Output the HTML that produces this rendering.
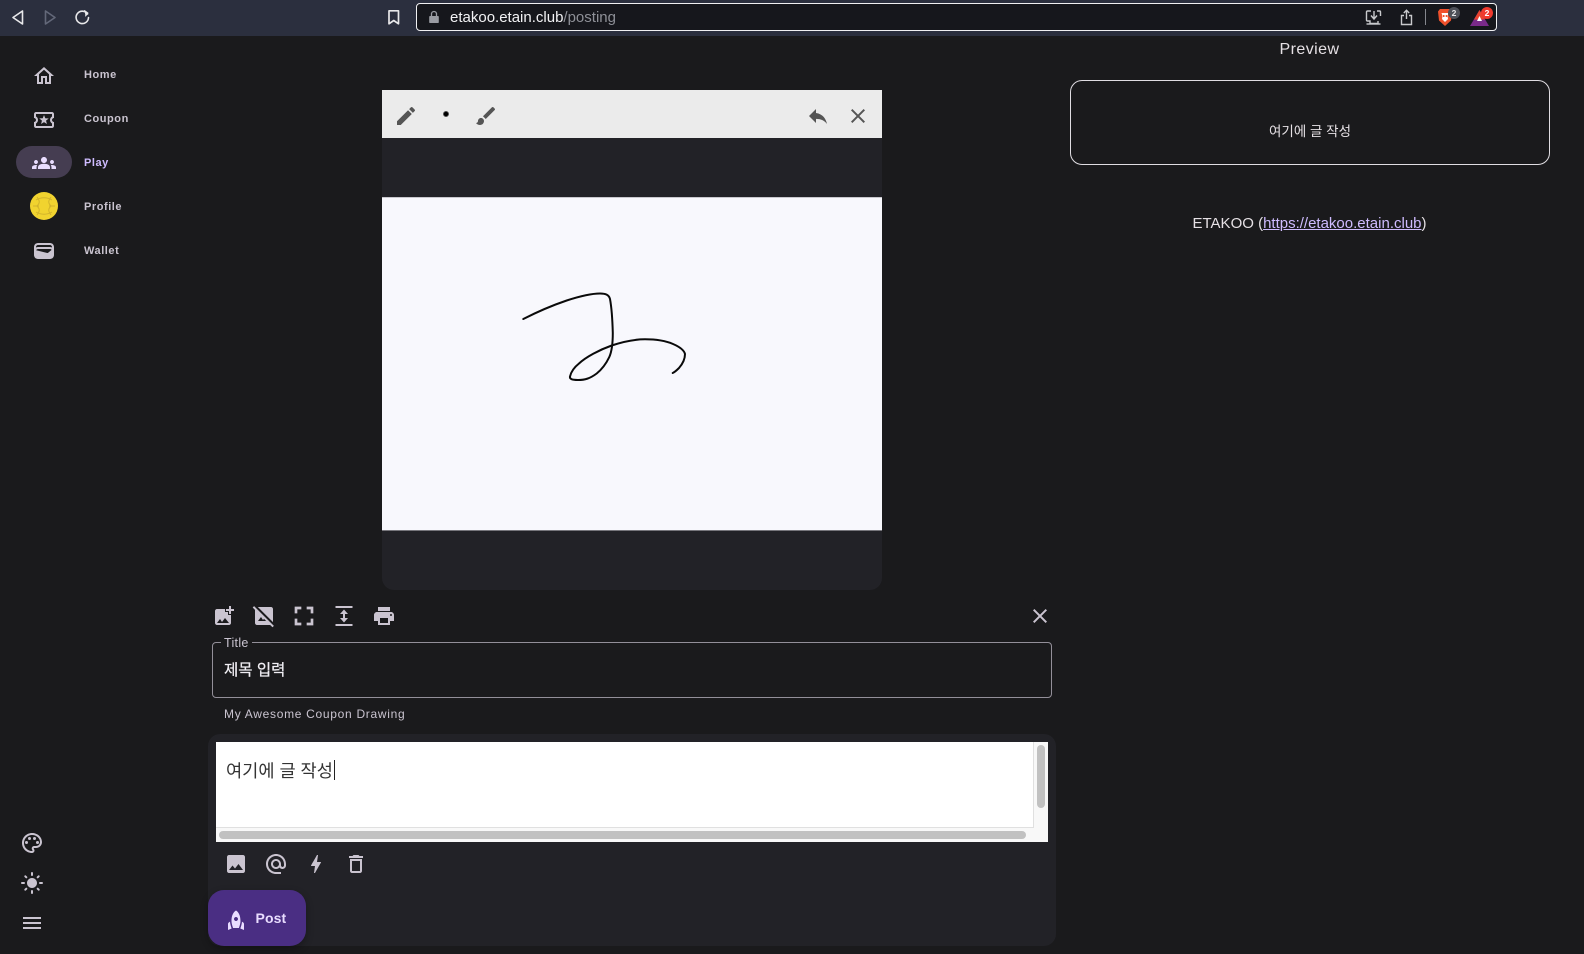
<!DOCTYPE html>
<html lang="ko"><head><meta charset="utf-8"><title>ETAKOO</title>
<style>
html,body{margin:0;padding:0;width:1584px;height:954px;overflow:hidden;background:#1a1a1c}
body{position:relative;font-family:"Liberation Sans","Noto Sans CJK KR",sans-serif}
.a,svg.i,svg.t{position:absolute}
svg.i{width:24px;height:24px;fill:#cac4d0}
svg.t{width:24px;height:24px;fill:#555}
.n{position:absolute;left:84px;font-size:11px;line-height:14px;font-weight:700;letter-spacing:.55px;color:#cac4d0}
</style></head><body>

<!-- browser bar -->
<div class="a" style="left:0;top:0;width:1584px;height:36px;background:#2b2f3e"></div>
<svg class="a" style="left:0;top:0" width="110" height="36" fill="none" stroke-linejoin="round" stroke-linecap="round">
<path d="M22.5 11v13L13 17.5z" stroke="#e8e8ea" stroke-width="1.6"/>
<path d="M45.5 11v13L55 17.5z" stroke="#636879" stroke-width="1.6"/>
<path d="M87.5 14a6.2 6.2 0 1 0 1 3.5" stroke="#e8e8ea" stroke-width="1.6"/>
<path d="M84.500 10.500l3.500 2.500-2.500 3" fill="#e8e8ea" stroke="#e8e8ea" stroke-width="1"/>
</svg>
<svg class="a" style="left:387px;top:9px" width="14" height="17" fill="none"><path d="M2 1.800h9.500v13l-4.750-3.300L2 14.800z" stroke="#e8e8ea" stroke-width="1.700" stroke-linejoin="round"/></svg>
<div class="a" style="left:416px;top:3px;width:1079px;height:26px;border:1px solid #f0f0f2;border-radius:4px;background:#16171c"></div>
<svg class="a" style="left:429px;top:10px" width="10" height="14"><path d="M1 6h8a.8.8 0 0 1 .8.800v5.400a.8.8 0 0 1-.8.800H1a.8.8 0 0 1-.8-.8V6.800A.8.8 0 0 1 1 6z" fill="#9a9ca3"/><path d="M2.500 6V4a2.500 2.500 0 0 1 5 0v2" fill="none" stroke="#9a9ca3" stroke-width="1.300"/></svg>
<div class="a" style="left:450px;top:9px;font-size:15px;line-height:18px;color:#f2f2f4;white-space:nowrap">etakoo.etain.club<span style="color:#8e9097">/posting</span></div>
<svg class="a" style="left:1365px;top:9px" width="18" height="18" fill="none" stroke="#c9cacd" stroke-width="1.400"><path d="M6 2H2.500a1 1 0 0 0-1 1v8a1 1 0 0 0 1 1h2.500v2.500h8V12M12 2h2.500a1 1 0 0 1 1 1v4"/><path d="M9 2v7M6 6.500L9 10l3-3.500"/><path d="M1.500 15h14"/></svg>
<svg class="a" style="left:1400px;top:9px" width="13" height="17" fill="none" stroke="#c9cacd" stroke-width="1.400"><path d="M4 6.500H1.500v9h10v-9H9M6.500 10V1.500M3.800 4L6.500 1.300 9.200 4"/></svg>
<div class="a" style="left:1425px;top:9px;width:1px;height:16px;background:#85878e"></div>
<svg class="a" style="left:1437px;top:8px" width="16" height="20"><path d="M3 1h10l2 2.500-1 9-6 5.500-6-5.500-1-9z" fill="#f0512c"/><path d="M4.500 5h7l-1 3 .5 3-3 3-3-3 .5-3z" fill="#fff"/><path d="M6 7h1.500v2H6zM8.700 7h1.500v2H8.700z" fill="#f0512c"/></svg>
<div class="a" style="left:1448px;top:7px;width:12px;height:12px;border-radius:6px;background:#4e5058;color:#e8e8ea;font-size:8.500px;font-weight:700;line-height:12px;text-align:center">2</div>
<svg class="a" style="left:1470px;top:9px" width="19" height="17"><path d="M9.500 1L19 17H0z" fill="#7a2a8a"/><path d="M9.500 1L15 10.500H4z" fill="#e8432e"/><path d="M9.500 7l2.500 5H7z" fill="#fff"/></svg>
<div class="a" style="left:1481px;top:7px;width:12px;height:12px;border-radius:6px;background:#f03a2e;color:#fff;font-size:8.500px;font-weight:700;line-height:12px;text-align:center">2</div>

<!-- sidebar -->
<svg class="i" style="left:32px;top:64px" viewBox="0 0 24 24"><path d="M12 5.690l5 4.500V18h-2v-6H9v6H7v-7.810l5-4.500M12 3L2 12h3v8h6v-6h2v6h6v-8h3L12 3z"/></svg>
<svg class="i" style="left:32px;top:107.500px" viewBox="0 0 24 24"><path d="M22 10V6c0-1.110-.9-2-2-2H4c-1.100 0-1.990.89-1.990 2v4c1.100 0 1.990.9 1.990 2s-.89 2-2 2v4c0 1.100.9 2 2 2h16c1.100 0 2-.9 2-2v-4c-1.100 0-2-.9-2-2s.9-2 2-2zm-2-1.460c-1.190.69-2 1.990-2 3.460s.81 2.770 2 3.460V18H4v-2.540c1.190-.69 2-1.990 2-3.460 0-1.480-.8-2.770-1.990-3.460L4 6h16v2.540zM9.070 16L12 14.120 14.930 16l-.89-3.360 2.690-2.200-3.470-.21L12 7l-1.270 3.220-3.470.21 2.690 2.200z"/></svg>
<div class="a" style="left:16px;top:146px;width:56px;height:32px;border-radius:16px;background:#453d51"></div>
<svg class="i" style="left:32px;top:151px;fill:#e9ddff" viewBox="0 0 24 24"><path d="M12 12.750c1.630 0 3.070.39 4.240.9 1.080.48 1.760 1.560 1.760 2.730V18H6v-1.610c0-1.180.68-2.260 1.760-2.730 1.170-.52 2.610-.91 4.240-.91zM4 13c1.100 0 2-.9 2-2s-.9-2-2-2-2 .9-2 2 .9 2 2 2zm1.130 1.100c-.37-.06-.74-.1-1.130-.1-.99 0-1.930.21-2.780.58C.48 14.900 0 15.620 0 16.430V18h4.500v-1.610c0-.83.23-1.610.63-2.290zM20 13c1.100 0 2-.9 2-2s-.9-2-2-2-2 .9-2 2 .9 2 2 2zm4 3.430c0-.81-.48-1.530-1.220-1.850-.85-.37-1.790-.58-2.780-.58-.39 0-.76.04-1.130.1.4.68.63 1.460.63 2.290V18H24v-1.570zM12 6c1.660 0 3 1.340 3 3s-1.340 3-3 3-3-1.340-3-3 1.340-3 3-3z"/></svg>
<svg class="a" style="left:30px;top:192px" width="28" height="28" viewBox="0 0 28 28"><circle cx="14" cy="14" r="14" fill="#f1d32f"/><g fill="none" stroke="#d2b32c" stroke-width="1"><path d="M7 5c3 4 3 6 0 9M21 5c-3 4-3 6 0 9M7 23c3-4 3-6 0-9M21 23c-3-4-3-6 0-9M6 8c5-3 11-3 16 0M6 20c5 3 11 3 16 0M3 14h6M19 14h6"/></g></svg>
<svg class="i" style="left:32px;top:239px" viewBox="0 0 24 24"><path d="M18 4H6C3.790 4 2 5.790 2 8v8c0 2.210 1.790 4 4 4h12c2.210 0 4-1.790 4-4V8c0-2.210-1.790-4-4-4zm-1.860 9.770c-.24.2-.57.28-.88.2L4.150 11.250C4.450 10.520 5.160 10 6 10h12c.67 0 1.260.34 1.630.84l-3.490 2.930zM6 6h12c1.100 0 2 .9 2 2v.55C19.410 8.210 18.730 8 18 8H6c-.73 0-1.410.21-2 .55V8c0-1.100.9-2 2-2z"/></svg>
<div class="n" style="top:68px">Home</div>
<div class="n" style="top:112px">Coupon</div>
<div class="n" style="top:156px;color:#cfbcff">Play</div>
<div class="n" style="top:200px">Profile</div>
<div class="n" style="top:244px">Wallet</div>
<svg class="i" style="left:20px;top:831px" viewBox="0 0 24 24"><path d="M12 22C6.490 22 2 17.510 2 12S6.490 2 12 2s10 4.040 10 9c0 3.310-2.690 6-6 6h-1.770c-.28 0-.5.22-.5.5 0 .12.05.23.13.33.41.47.64 1.060.64 1.670 0 1.380-1.120 2.500-2.500 2.500zm0-18c-4.410 0-8 3.590-8 8s3.590 8 8 8c.28 0 .5-.22.5-.5 0-.16-.08-.28-.14-.35-.41-.46-.63-1.050-.63-1.650 0-1.380 1.120-2.500 2.500-2.500H16c2.210 0 4-1.790 4-4 0-3.860-3.590-7-8-7z"/><circle cx="6.500" cy="11.500" r="1.500"/><circle cx="9.500" cy="7.500" r="1.500"/><circle cx="14.500" cy="7.500" r="1.500"/><circle cx="17.500" cy="11.500" r="1.500"/></svg>
<svg class="i" style="left:20px;top:871px" viewBox="0 0 24 24"><path d="M12 7c-2.760 0-5 2.240-5 5s2.240 5 5 5 5-2.240 5-5-2.240-5-5-5zM2 13h2c.55 0 1-.45 1-1s-.45-1-1-1H2c-.55 0-1 .45-1 1s.45 1 1 1zm18 0h2c.55 0 1-.45 1-1s-.45-1-1-1h-2c-.55 0-1 .45-1 1s.45 1 1 1zM11 2v2c0 .55.45 1 1 1s1-.45 1-1V2c0-.55-.45-1-1-1s-1 .45-1 1zm0 18v2c0 .55.45 1 1 1s1-.45 1-1v-2c0-.55-.45-1-1-1s-1 .45-1 1zM5.990 4.580c-.39-.39-1.030-.39-1.410 0-.39.39-.39 1.030 0 1.410l1.060 1.060c.39.39 1.030.39 1.410 0s.39-1.030 0-1.410L5.990 4.580zm12.370 12.370c-.39-.39-1.030-.39-1.410 0-.39.39-.39 1.030 0 1.410l1.060 1.060c.39.39 1.030.39 1.410 0 .39-.39.39-1.030 0-1.410l-1.060-1.060zm1.060-10.960c.39-.39.39-1.030 0-1.410-.39-.39-1.030-.39-1.410 0l-1.060 1.060c-.39.39-.39 1.030 0 1.410s1.030.39 1.410 0l1.060-1.060zM7.050 18.360c.39-.39.39-1.030 0-1.410-.39-.39-1.030-.39-1.410 0l-1.060 1.060c-.39.39-.39 1.030 0 1.410s1.030.39 1.410 0l1.060-1.060z"/></svg>
<svg class="i" style="left:20px;top:911px" viewBox="0 0 24 24"><path d="M3 18h18v-2H3v2zm0-5h18v-2H3v2zm0-7v2h18V6H3z"/></svg>

<!-- canvas card -->
<div class="a" style="left:382px;top:90px;width:500px;height:500px;background:#222227;border-radius:0 0 12px 12px"></div>
<div class="a" style="left:382px;top:90px;width:500px;height:48px;background:#ebebeb"></div>
<svg class="t" style="left:394px;top:104px" viewBox="0 0 24 24"><path d="M3 17.250V21h3.750L17.810 9.940l-3.750-3.750L3 17.250zM20.710 7.040c.39-.39.39-1.020 0-1.410l-2.340-2.340c-.39-.39-1.020-.39-1.410 0l-1.830 1.830 3.750 3.750 1.830-1.830z"/></svg>
<svg class="a" style="left:442px;top:110px" width="8" height="8"><circle cx="4" cy="4" r="2.600" fill="#000" stroke="#555" stroke-width=".8"/></svg>
<svg class="t" style="left:474px;top:104px" viewBox="0 0 24 24"><path d="M7 14c-1.660 0-3 1.340-3 3 0 1.310-1.160 2-2 2 .92 1.220 2.490 2 4 2 2.210 0 4-1.790 4-4 0-1.660-1.340-3-3-3zm13.710-9.370l-1.340-1.340c-.39-.39-1.020-.39-1.410 0L9 12.250 11.750 15l8.960-8.960c.39-.39.39-1.030 0-1.410z"/></svg>
<svg class="t" style="left:806px;top:104px" viewBox="0 0 24 24"><path d="M10 9V5l-7 7 7 7v-4.100c5 0 8.500 1.600 11 5.100-1-5-4-10-11-11z"/></svg>
<svg class="t" style="left:846px;top:104px" viewBox="0 0 24 24"><path d="M19 6.410L17.590 5 12 10.590 6.410 5 5 6.410 10.590 12 5 17.590 6.410 19 12 13.410 17.590 19 19 17.590 13.410 12z"/></svg>
<svg class="a" style="left:382px;top:197px;background:#f8f8fd" width="500" height="334" viewBox="382 197 500 334" fill="none">
<rect x="382" y="530" width="500" height="1" fill="#77767c"/>
<rect x="382" y="197" width="500" height="1" fill="#c9c8ce"/>
<path d="M523.300 319C537 312 552 305.500 566.700 300.500C579 296.500 590 293.500 600 293.500C606 293.500 609 295 610 299C611.500 307 612.500 322 612.800 333C612.800 343 612 351 609.300 357C605.500 365 601 370 596.700 373.500C590 378.500 585 380 578 380C572 380 569.500 379 570 376.500C571 372 574 367.500 579 363.500C586 357 599 350 611.700 345.500C622 342 633 339.300 645 339.300C656 339.300 666 341 673 344C680 347 684 350 685 354C685 360 682.500 364 679 368C677 370 675 372 672.700 373" stroke="#0a0a0a" stroke-width="2" stroke-linecap="round" stroke-linejoin="round"/>
</svg>

<!-- toolbar -->
<svg class="i" style="left:212px;top:604px" viewBox="0 0 24 24"><path d="M19 7v2.990s-1.990.01-2 0V7h-3s.01-1.990 0-2h3V2h2v3h3v2h-3zm-3 4V8h-3V5H5c-1.100 0-2 .9-2 2v12c0 1.100.9 2 2 2h12c1.100 0 2-.9 2-2v-8h-3zM5 19l3-4 2 3 3-4 4 5H5z"/></svg>
<svg class="i" style="left:252px;top:604px" viewBox="0 0 24 24"><path d="M21 18.170V5c0-1.100-.9-2-2-2H5.830L21 18.170zM20.490 23.310L18.170 21H5c-1.100 0-2-.9-2-2V5.830L.69 3.510 2.100 2.100l19.800 19.800-1.410 1.410zM14.170 17L12 14.830 11 16l-2-3-3 4h8.170z"/></svg>
<svg class="i" style="left:292px;top:604px" viewBox="3 3 18 18"><path d="M7 14H5v5h5v-2H7v-3zm-2-4h2V7h3V5H5v5zm12 7h-3v2h5v-5h-2v3zM14 5v2h3v3h2V5h-5z"/></svg>
<svg class="i" style="left:332px;top:604px" viewBox="0 0 24 24"><path d="M3.500 2h17v2h-17zM3.500 20h17v2h-17zM13 10h3l-4-4.500L8 10h3v4H8l4 4.500 4-4.500h-3z"/></svg>
<svg class="i" style="left:372px;top:604px" viewBox="0 0 24 24"><path d="M19 8H5c-1.660 0-3 1.340-3 3v6h4v4h12v-4h4v-6c0-1.660-1.340-3-3-3zm-3 11H8v-5h8v5zm3-7c-.55 0-1-.45-1-1s.45-1 1-1 1 .45 1 1-.45 1-1 1zm-1-9H6v4h12V3z"/></svg>
<svg class="i" style="left:1028px;top:604px" viewBox="0 0 24 24"><path d="M19 6.410L17.590 5 12 10.590 6.410 5 5 6.410 10.590 12 5 17.590 6.410 19 12 13.410 17.590 19 19 17.590 13.410 12z"/></svg>

<!-- title field -->
<div class="a" style="left:212px;top:642px;width:838px;height:54px;border:1px solid #938f99;border-radius:4px"></div>
<div class="a" style="left:221px;top:634.500px;background:#1a1a1c;padding:0 3px;font-size:12.500px;line-height:16px;color:#cac4d0;letter-spacing:.3px">Title</div>
<div class="a" style="left:224px;top:658.500px;font-size:15.500px;line-height:24px;color:#f0eef3;-webkit-text-stroke:.25px #f0eef3">제목 입력</div>
<div class="a" style="left:224px;top:706px;font-size:12px;line-height:16px;color:#cac4d0;letter-spacing:.7px">My Awesome Coupon Drawing</div>

<!-- editor -->
<div class="a" style="left:208px;top:734px;width:848px;height:212px;background:#222227;border-radius:12px"></div>
<div class="a" style="left:216px;top:742px;width:832px;height:100px;background:#f8f8f8"></div>
<div class="a" style="left:216px;top:742px;width:817px;height:85px;background:#fff;border-right:1px solid #e0e0e0;border-bottom:1px solid #e0e0e0"></div>
<div class="a" style="left:1037px;top:745px;width:8px;height:63px;border-radius:4px;background:#c1c1c1"></div>
<div class="a" style="left:219px;top:831px;width:807px;height:8px;border-radius:4px;background:#c1c1c1"></div>
<div class="a" style="left:226px;top:759px;font-size:17.600px;line-height:24px;color:#333;white-space:nowrap">여기에 글 작성</div>
<div class="a" style="left:333.500px;top:760px;width:1px;height:20px;background:#222"></div>
<svg class="i" style="left:224px;top:852px" viewBox="0 0 24 24"><path d="M21 19V5c0-1.100-.9-2-2-2H5c-1.100 0-2 .9-2 2v14c0 1.100.9 2 2 2h14c1.100 0 2-.9 2-2zM8.500 13.500l2.500 3.010L14.500 12l4.500 6H5l3.500-4.500z"/></svg>
<svg class="i" style="left:264px;top:852px" viewBox="0 0 24 24"><path d="M12 2C6.480 2 2 6.480 2 12s4.480 10 10 10h5v-2h-5c-4.340 0-8-3.660-8-8s3.660-8 8-8 8 3.660 8 8v1.430c0 .79-.71 1.570-1.500 1.570s-1.500-.78-1.500-1.570V12c0-2.760-2.240-5-5-5s-5 2.240-5 5 2.240 5 5 5c1.380 0 2.640-.56 3.540-1.470.65.89 1.770 1.470 2.960 1.470 1.970 0 3.500-1.600 3.500-3.570V12c0-5.520-4.480-10-10-10zm0 13c-1.660 0-3-1.340-3-3s1.340-3 3-3 3 1.340 3 3-1.340 3-3 3z"/></svg>
<svg class="i" style="left:304px;top:852px" viewBox="0 0 24 24"><path d="M11 21h-1l1-7H7.500c-.58 0-.57-.32-.38-.66.19-.34.05-.08.07-.12C8.480 10.940 10.420 7.540 13 3h1l-1 7h3.500c.49 0 .56.33.47.51l-.07.15C12.960 17.550 11 21 11 21z"/></svg>
<svg class="i" style="left:344px;top:852px" viewBox="0 0 24 24"><path d="M6 19c0 1.100.9 2 2 2h8c1.100 0 2-.9 2-2V7H6v12zM8 9h8v10H8V9zm7.500-5l-1-1h-5l-1 1H5v2h14V4z"/></svg>

<!-- FAB -->
<div class="a" style="left:208px;top:890px;width:98px;height:56px;border-radius:16px;background:#4a2e83;box-shadow:0 3px 8px rgba(0,0,0,.3)"></div>
<svg class="i" style="left:224px;top:908px;fill:#e9ddff" viewBox="0 0 24 24"><path d="M12 2.500s4.500 2.040 4.500 10.500c0 2.490-1.040 5.570-1.600 7H9.100c-.56-1.430-1.600-4.510-1.600-7C7.500 4.540 12 2.500 12 2.500zm2 8.500c0-1.100-.9-2-2-2s-2 .9-2 2 .9 2 2 2 2-.9 2-2zm-6.310 9.520c-.48-1.230-1.520-4.170-1.670-6.870l-1.130.75c-.56.38-.89 1-.89 1.670V22l3.690-1.480zM20 22v-5.930c0-.67-.33-1.290-.89-1.660l-1.130-.75c-.15 2.690-1.200 5.640-1.670 6.870L20 22z"/></svg>
<div class="a" style="left:255.500px;top:908px;font-size:14px;line-height:20px;font-weight:700;color:#e9ddff;letter-spacing:.1px">Post</div>

<!-- preview -->
<div class="a" style="left:1209.500px;width:200px;top:39.500px;text-align:center;font-size:16px;line-height:20px;color:#e6e1e5;letter-spacing:.45px">Preview</div>
<div class="a" style="left:1070px;top:80px;width:478px;height:83px;border:1px solid #e0dde2;border-radius:12px"></div>
<div class="a" style="left:1210px;width:200px;top:123px;text-align:center;font-size:13.500px;line-height:18px;color:#e6e1e5">여기에 글 작성</div>
<div class="a" style="left:1109.500px;width:400px;top:215px;text-align:center;font-size:15px;line-height:18px;color:#e6e1e5;white-space:nowrap">ETAKOO (<span style="color:#cfbcff;text-decoration:underline">https://etakoo.etain.club</span>)</div>

</body></html>
